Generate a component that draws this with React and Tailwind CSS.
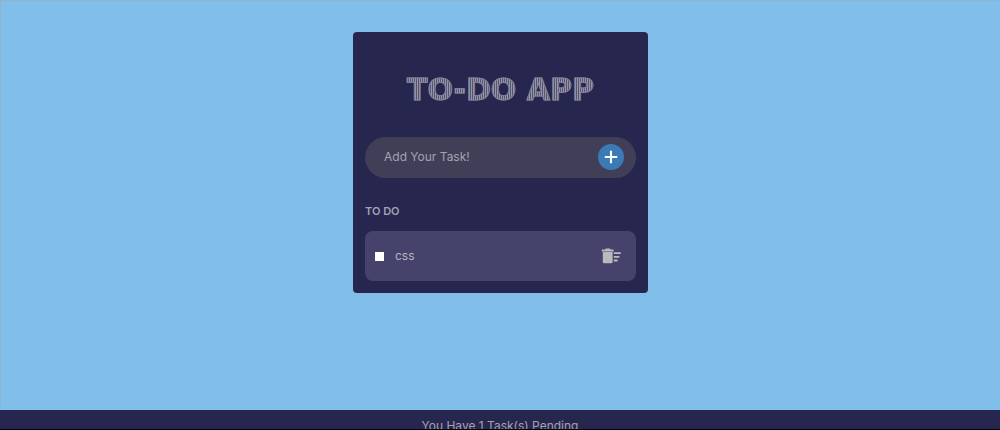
import { useState } from "react";

function PlusIcon() {
  return (
    <svg viewBox="0 0 14 14" className="size-3.5" aria-hidden="true">
      <path d="M7 .8v12.4M.8 7h12.4" stroke="#fff" strokeWidth="2.1" fill="none" />
    </svg>
  );
}

function TrashIcon() {
  return (
    <svg viewBox="0 0 20 16" className="h-4 w-5" fill="#b9b9c0" aria-hidden="true">
      <path d="M.8 1.600h3.200L4.800.4h4l.8 1.200h3v2H.8z" />
      <path d="M1.800 4.100h9.800v9.800a1.400 1.400 0 0 1-1.400 1.400H3.200a1.400 1.400 0 0 1-1.400-1.400z" />
      <path d="M12.800 4.200h7v1.800h-7zM12.800 7.900h5.600v1.800h-5.600zM12.800 11.600h3.800v1.800h-3.800z" />
    </svg>
  );
}

export default function App() {
  const [tasks, setTasks] = useState([{ id: 1, name: "css", done: false }]);
  const [text, setText] = useState("");
  const pending = tasks.filter((t) => !t.done).length;

  const add = (e) => {
    e.preventDefault();
    if (!text.trim()) return;
    setTasks([...tasks, { id: Date.now(), name: text.trim(), done: false }]);
    setText("");
  };
  const toggle = (id) =>
    setTasks(tasks.map((t) => (t.id === id ? { ...t, done: !t.done } : t)));
  const remove = (id) => setTasks(tasks.filter((t) => t.id !== id));

  return (
    <div className="flex h-screen flex-col overflow-hidden border-t border-b border-t-[#8fb4cf] border-b-black bg-[#81beea] font-['Inter',sans-serif] text-xs text-[#a3a2b2]">
      <main className="min-h-[calc(100vh-21px)] shrink-0 border-l border-[#8fb4cf] pt-[31px]">
        <section className="mx-auto w-full max-w-[295px] rounded bg-[#27264f] p-3">
          <h1 className="bg-[repeating-linear-gradient(90deg,#9695a9_0px,#9695a9_1px,#565570_1px,#565570_2px)] bg-clip-text pt-[30px] text-center font-['DejaVu_Sans',sans-serif] text-[30px] leading-8 font-bold text-transparent [-webkit-text-stroke:1px_#83829a]">
            TO-DO APP
          </h1>
          <form
            onSubmit={add}
            className="mt-[31px] flex items-center rounded-full bg-[#413f58] pt-[7px] pr-3 pb-2 pl-[19px]"
          >
            <input
              type="text"
              aria-label="New task"
              placeholder="Add Your Task!"
              value={text}
              onChange={(e) => setText(e.target.value)}
              className="min-w-0 flex-1 bg-transparent outline-none placeholder:text-[#a3a2b2]"
            />
            <button
              type="submit"
              aria-label="Add task"
              className="flex size-[26px] items-center justify-center rounded-full bg-[#3c7ab5]"
            >
              <PlusIcon />
            </button>
          </form>
          <h2 className="mt-[25px] text-[11px] leading-4 font-semibold">TO DO</h2>
          <ul className="mt-3 flex flex-col gap-2">
            {tasks.map((t) => (
              <li
                key={t.id}
                className="flex items-center justify-between rounded-lg bg-[#45436b] py-[17px] pr-[15px] pl-2.5"
              >
                <label className="flex items-center gap-[11px] text-[#b5b4c0]">
                  <input
                    type="checkbox"
                    checked={t.done}
                    onChange={() => toggle(t.id)}
                    className="size-[9px] appearance-none bg-white checked:bg-[#3c7ab5]"
                  />
                  {t.name}
                </label>
                <button type="button" aria-label={"Delete " + t.name} onClick={() => remove(t.id)}>
                  <TrashIcon />
                </button>
              </li>
            ))}
          </ul>
        </section>
      </main>
      <footer className="shrink-0 bg-[#27264f] py-2 text-center">
        <p>You Have {pending} Task(s) Pending</p>
      </footer>
    </div>
  );
}
